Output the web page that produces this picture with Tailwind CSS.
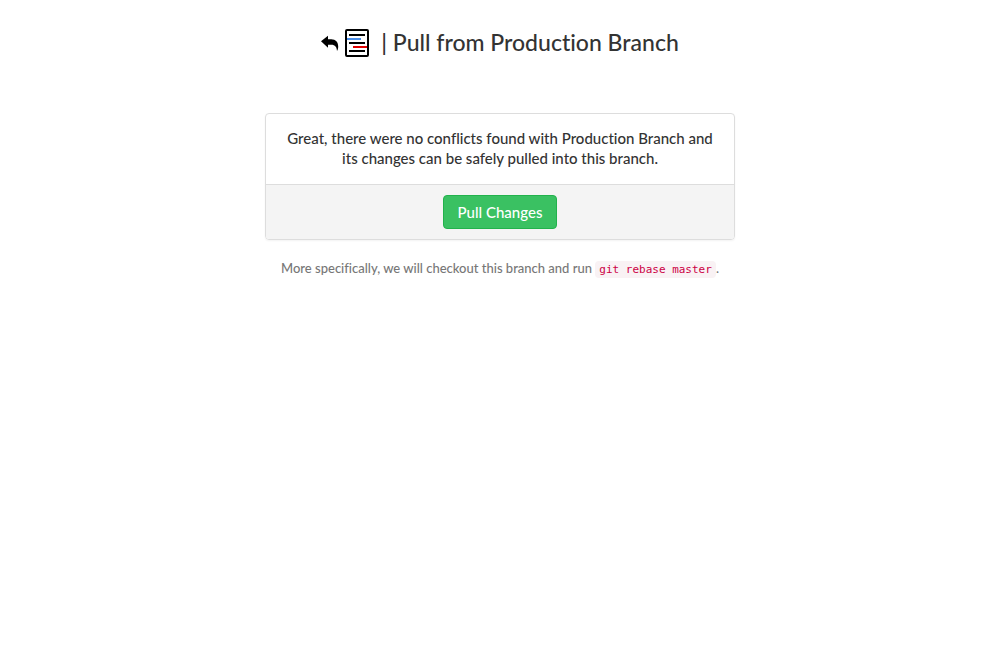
<!DOCTYPE html>
<html lang="en">
<head>
<meta charset="utf-8">
<meta name="viewport" content="width=device-width, initial-scale=1">
<title>Pull from Production Branch</title>
<script src="https://cdn.jsdelivr.net/npm/@tailwindcss/browser@4"></script>
</head>
<body class="bg-white px-4 font-[Lato,'Noto_Sans',sans-serif] text-[15px] leading-5 font-medium text-[#333] [font-variant-ligatures:none]">
<header class="flex items-start justify-center pt-7">
  <a href="#" aria-label="Back" class="flex items-center gap-[6px] text-black">
    <svg class="h-[18px] w-[18px]" viewBox="0 0 18 18" fill="currentColor" aria-hidden="true"><path d="M0 7.2 7 1.8v3.4h3.2c4.6 0 7 3 7 7.2 0 1.6-.3 3-1.2 4.6-.2-4-1.8-6.3-5.8-6.3H7v3z"/></svg>
    <svg class="h-[30px] w-6" viewBox="0 0 24 30" fill="none" aria-hidden="true"><rect x="1" y="2" width="22" height="26" rx="1" stroke="#000" stroke-width="2"/><path d="M4 7h16M4 15h16M4 23h16" stroke="#000" stroke-width="2"/><path d="M2 11h14" stroke="#4a8ee8" stroke-width="2"/><path d="M8 19h14" stroke="#e00000" stroke-width="2"/></svg>
  </a>
  <h1 class="ml-3 text-[23px] leading-7 font-medium">| Pull from Production Branch</h1>
</header>
<main class="mx-auto mt-[55px] max-w-[470px] text-center">
  <section class="overflow-hidden rounded border border-[#ddd] shadow-xs">
    <p class="px-3 pt-[14px] pb-4">Great, there were no conflicts found with Production Branch and its changes can be safely pulled into this branch.</p>
    <div class="flex justify-center border-t border-[#ddd] bg-[#f4f4f4] p-[10px]">
      <button type="button" class="rounded border border-[#22b24c] bg-[#3ac162] px-[14px] py-[6px] text-white">Pull Changes</button>
    </div>
  </section>
  <p class="mt-[18px] text-[13px] text-[#777]">More specifically, we will checkout this branch and run <code class="rounded bg-[#f9f2f4] px-1 py-[2px] font-['DejaVu_Sans_Mono',monospace] text-[11px] text-[#cc0044]">git rebase master</code>.</p>
</main>
</body>
</html>
